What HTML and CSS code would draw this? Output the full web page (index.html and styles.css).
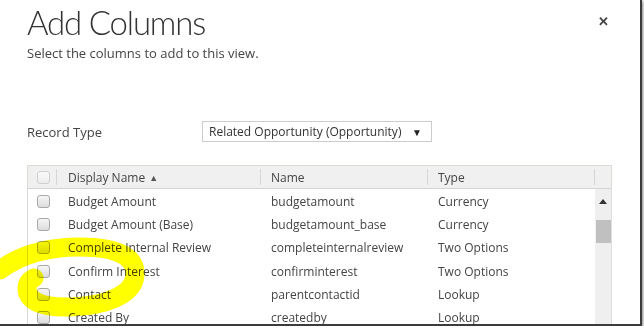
FILE: index.html
```html
<!DOCTYPE html>
<html>

<head>
    <title>Add Columns</title>
    <link rel="stylesheet" href="styles.css">
</head>

<body>
<div class="dialog">
    <div class="title-row">
        <h1 class="title">Add Columns</h1>
        <span class="close">&#x2715;</span>
    </div>
    <p class="subtitle">Select the columns to add to this view.</p>

    <div class="record-type">
        <label>Record Type</label>
        <div class="select">
            <span>Related Opportunity (Opportunity)</span>
            <span class="select-arrow">&#9660;</span>
        </div>
    </div>

    <div class="grid">
        <div class="grid-head">
            <div class="cell cell-check"><span class="checkbox checkbox-head"></span></div>
            <div class="cell cell-display">Display Name <span class="sort">&#9650;</span></div>
            <div class="cell cell-name">Name</div>
            <div class="cell cell-type">Type</div>
            <div class="cell cell-end"></div>
        </div>
        <div class="grid-body">
            <div class="rows">
                <div class="row">
                    <div class="cell cell-check"><span class="checkbox"></span></div>
                    <div class="cell cell-display">Budget Amount</div>
                    <div class="cell cell-name">budgetamount</div>
                    <div class="cell cell-type">Currency</div>
                </div>
                <div class="row">
                    <div class="cell cell-check"><span class="checkbox"></span></div>
                    <div class="cell cell-display">Budget Amount (Base)</div>
                    <div class="cell cell-name">budgetamount_base</div>
                    <div class="cell cell-type">Currency</div>
                </div>
                <div class="row">
                    <div class="cell cell-check"><span class="checkbox"></span></div>
                    <div class="cell cell-display">Complete Internal Review</div>
                    <div class="cell cell-name">completeinternalreview</div>
                    <div class="cell cell-type">Two Options</div>
                </div>
                <div class="row">
                    <div class="cell cell-check"><span class="checkbox"></span></div>
                    <div class="cell cell-display">Confirm Interest</div>
                    <div class="cell cell-name">confirminterest</div>
                    <div class="cell cell-type">Two Options</div>
                </div>
                <div class="row">
                    <div class="cell cell-check"><span class="checkbox"></span></div>
                    <div class="cell cell-display">Contact</div>
                    <div class="cell cell-name">parentcontactid</div>
                    <div class="cell cell-type">Lookup</div>
                </div>
                <div class="row">
                    <div class="cell cell-check"><span class="checkbox"></span></div>
                    <div class="cell cell-display">Created By</div>
                    <div class="cell cell-name">createdby</div>
                    <div class="cell cell-type">Lookup</div>
                </div>
            </div>
            <div class="scrollbar">
                <span class="scroll-up"></span>
                <span class="scroll-thumb"></span>
            </div>
        </div>
    </div>

    <svg class="marker" width="160" height="95" viewBox="0 0 160 95">
        <path d="M0 38 C 20 23, 45 15, 80 15 C 120 15, 136 26, 135 43 C 134 63, 105 74, 70 75 C 40 76, 27 68, 27 56 C 27 50, 30 48, 34 46"
              fill="none" stroke="#ffff00" stroke-width="19" stroke-linecap="round" stroke-linejoin="round"/>
    </svg>
</div>
</body>
</html>
```

FILE: styles.css
```css
* {
    box-sizing: border-box;
}
body, html {
    padding: 0;
    margin: 0;
    background-color: #fff;
}
.dialog {
    position: relative;
    width: 642px;
    height: 326px;
    padding-left: 27px;
    border-right: 2px solid #3c3c3c;
    border-bottom: 2px solid #3c3c3c;
    box-shadow: 1px 1px 3px rgba(0,0,0,0.5);
    overflow: hidden;
    font-family: "Open Sans", "Noto Sans", sans-serif;
    color: #444;
}
.title-row {
    display: flex;
    justify-content: space-between;
    align-items: flex-start;
    padding-right: 31px;
}
.title {
    margin: 0;
    font-family: Lato, "Open Sans", sans-serif;
    font-size: 33px;
    font-weight: 300;
    letter-spacing: -1.2px;
    line-height: 44px;
    color: #333;
}
.close {
    margin-top: 12px;
    font-size: 13px;
    font-weight: bold;
    color: #444;
}
.subtitle {
    margin: 0;
    font-size: 13px;
    line-height: 18px;
}
.record-type {
    display: flex;
    align-items: center;
    margin-top: 59px;
}
.record-type label {
    width: 175px;
    font-size: 13px;
}
.select {
    display: flex;
    justify-content: space-between;
    align-items: center;
    width: 230px;
    height: 21px;
    padding: 0 9px 0 6px;
    border: 1px solid #ccc;
    font-size: 12px;
    color: #333;
}
.select-arrow {
    font-size: 10px;
    color: #222;
}
.grid {
    margin-top: 23px;
    width: 585px;
    font-size: 12px;
}
.grid-head {
    display: flex;
    height: 24px;
    background-color: #f0f0f0;
    border: 1px solid #dcdcd4;
    border-bottom-color: #d4d4d0;
}
.grid-head .cell {
    border-right: 1px solid #d6d6d6;
    margin: 3px 0;
}
.grid-head .cell-end {
    border-right: 0;
    flex: 1;
}
.cell {
    display: flex;
    align-items: center;
}
.cell-check {
    width: 29px;
    justify-content: center;
    padding-left: 2px;
}
.cell-display {
    width: 204px;
    padding-left: 11px;
}
.cell-name {
    width: 167px;
    padding-left: 10px;
}
.cell-type {
    width: 167px;
    padding-left: 10px;
}
.sort {
    font-size: 9px;
    margin-left: 4px;
    color: #555;
}
.grid-body {
    display: flex;
    border-left: 1px solid #d8d8d8;
}
.rows {
    flex: 1;
    padding-top: 1px;
}
.row {
    display: flex;
    height: 23.2px;
}
.checkbox {
    display: block;
    width: 13px;
    height: 13px;
    border: 1px solid #a8a8a8;
    border-radius: 3px;
    background: linear-gradient(#f6f6f6, #dcdcdc);
}
.checkbox-head {
    border-color: #cfcfcf;
    background: linear-gradient(#fafafa, #ececec);
}
.scrollbar {
    display: flex;
    flex-direction: column;
    align-items: center;
    width: 20px;
    height: 140px;
    background-color: #efefef;
    border-right: 1px solid #dedede;
}
.scroll-up {
    margin-top: 10px;
    border-left: 4px solid transparent;
    border-right: 4px solid transparent;
    border-bottom: 5px solid #333;
}
.scroll-thumb {
    margin-top: 16px;
    width: 15px;
    height: 23px;
    background-color: #c0c0c0;
}
.marker {
    position: absolute;
    left: 0;
    top: 232px;
    mix-blend-mode: multiply;
}
```
